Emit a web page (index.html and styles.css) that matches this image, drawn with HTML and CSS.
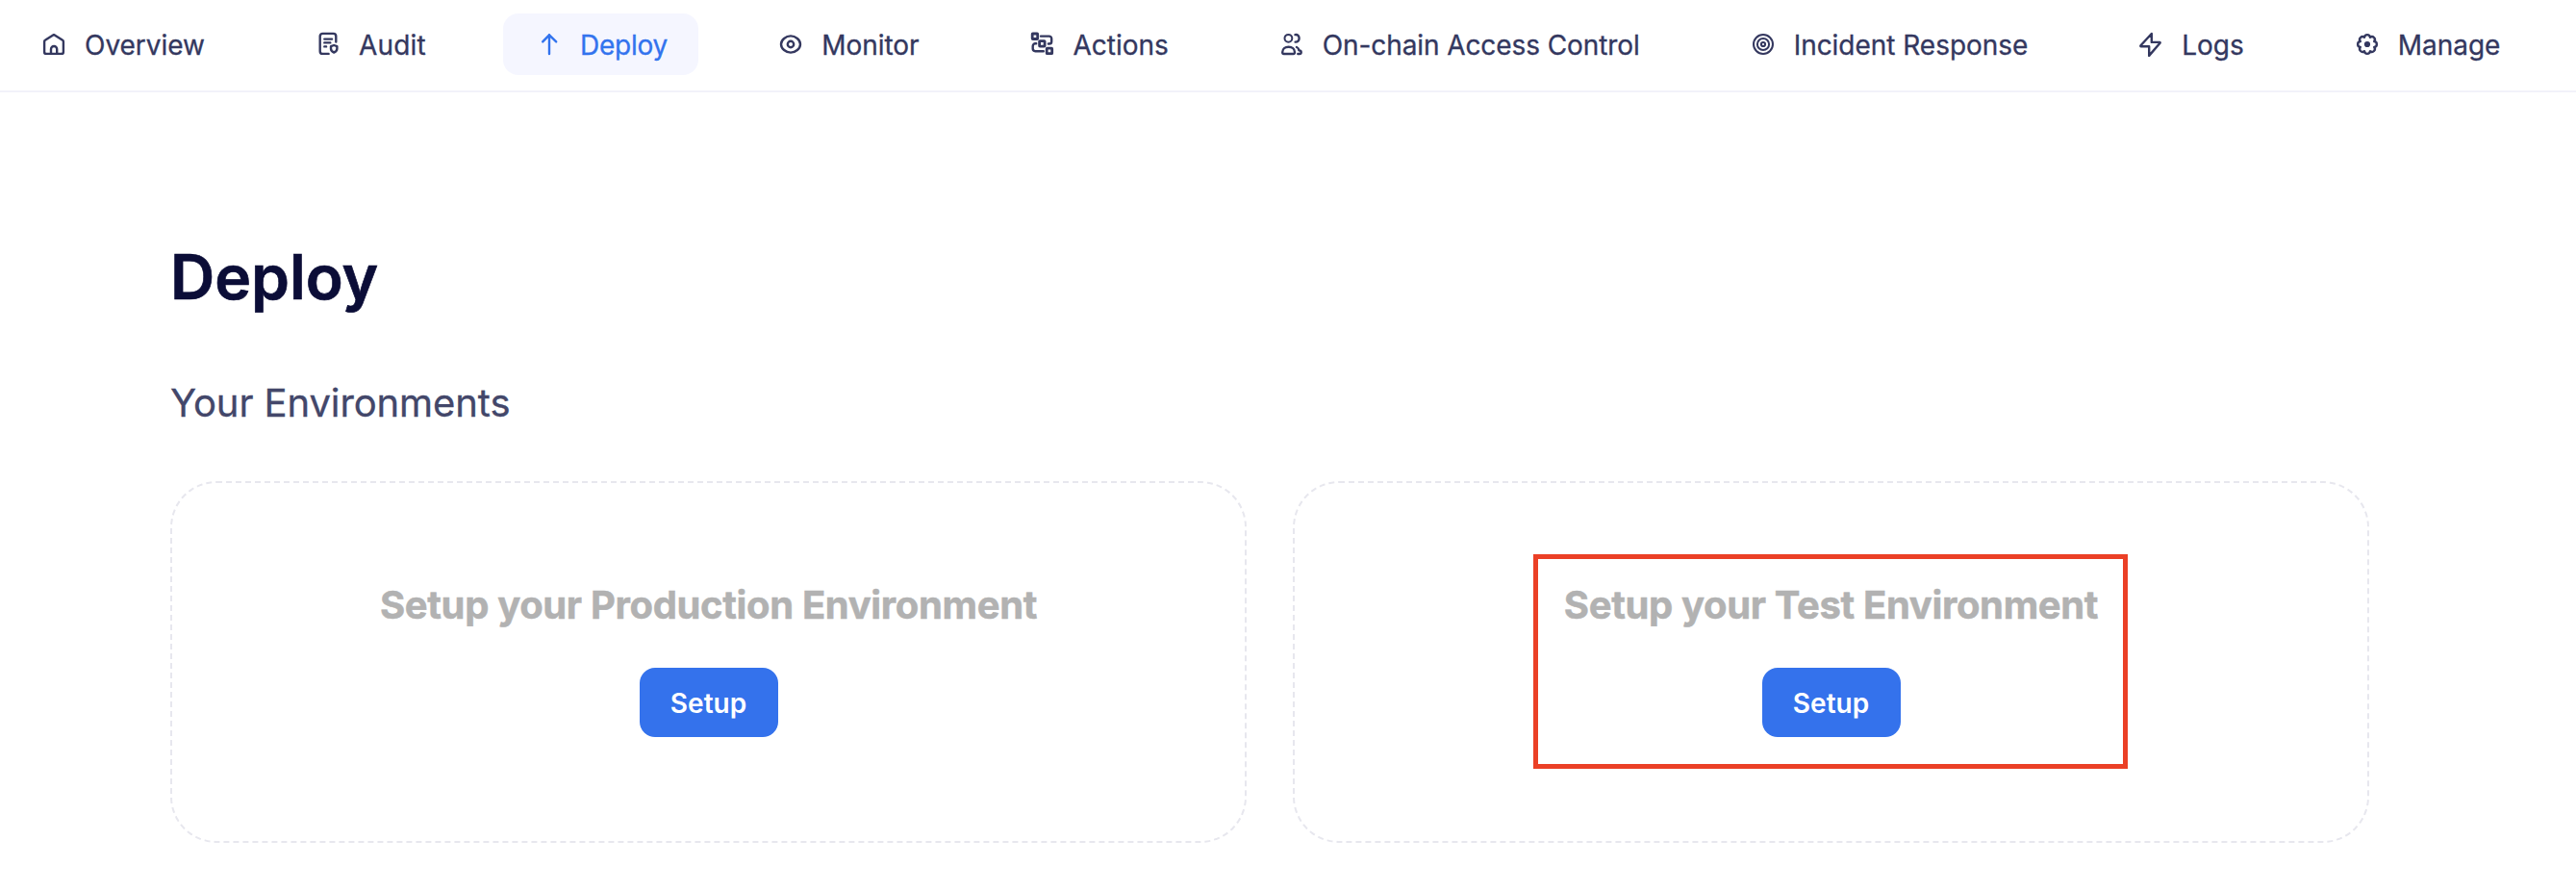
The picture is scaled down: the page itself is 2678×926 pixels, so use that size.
FILE: index.html
```html
<!DOCTYPE html>
<html lang="en">
<head>
<meta charset="utf-8">
<title>Deploy</title>
<link rel="stylesheet" href="styles.css">
</head>
<body>
<nav class="nav">
  <a class="nav-link">
    <svg class="icon" viewBox="0 0 32 32"><path d="M6.1 13.2a1.6 1.6 0 0 1 .8-1.4L16 6.1l9.1 5.7a1.6 1.6 0 0 1 .8 1.4v10.7a2 2 0 0 1-2 2H8.100a2 2 0 0 1-2-2z"/><path d="M13 25.500v-4.400a3.100 3.100 0 0 1 6.200 0v4.400"/></svg>
    <span class="nav-label">Overview</span>
  </a>
  <a class="nav-link nav-link--short">
    <svg class="icon" viewBox="0 0 32 32"><path d="M24.300 13.500V7.600a2.700 2.700 0 0 0-2.700-2.700H10.400a2.700 2.700 0 0 0-2.700 2.700v15.600a2.700 2.700 0 0 0 2.700 2.700h6.200M12.300 10.600h7.800M12.300 14.400h6M12.300 18.400h1.800M22.200 17l3.200 1.200v2.400c0 2-1.300 3.200-3.200 3.900-1.900-.7-3.200-1.900-3.200-3.900v-2.400z"/></svg>
    <span class="nav-label">Audit</span>
  </a>
  <a class="nav-link nav-link--active">
    <svg class="icon" viewBox="0 0 32 32"><path d="M16 26V6.300M9.200 13.400L16 6.300l7.200 7.100"/></svg>
    <span class="nav-label">Deploy</span>
  </a>
  <a class="nav-link">
    <svg class="icon" viewBox="0 0 32 32"><path d="M6 16c0-4.600 5-8.600 10-8.600s10 4 10 8.600-5 8.600-10 8.600S6 20.600 6 16z"/><circle cx="16" cy="16" r="3.200"/></svg>
    <span class="nav-label">Monitor</span>
  </a>
  <a class="nav-link">
    <svg class="icon" viewBox="0 0 32 32"><g class="icon-bold"><rect x="5.200" y="5" width="5.500" height="5.500" rx=".5"/><rect x="12.600" y="12.600" width="5.500" height="5.500" rx=".5"/><rect x="20.200" y="20.200" width="5.500" height="5.500" rx=".5"/></g><path d="M14 7.600h8.600a2.600 2.600 0 0 1 2.600 2.600v3a2.300 2.300 0 0 1-2.300 2.300h-1M9.200 15.300h-.9a2.600 2.600 0 0 0-2.600 2.600v2.700a2.600 2.600 0 0 0 2.600 2.600h8.500"/></svg>
    <span class="nav-label">Actions</span>
  </a>
  <a class="nav-link nav-link--long">
    <svg class="icon" viewBox="0 0 32 32"><circle class="icon-thin" cx="12.400" cy="9.800" r="3.900"/><path d="M19.400 6.100c2.700-.4 4.200 1.400 4.200 3.700s-1.500 4.100-4 3.800M6.200 24.300c0-3.300 2.900-5.600 6.400-5.600s6.400 2.300 6.400 5.600c0 1-.6 1.700-1.600 1.700H7.800c-1 0-1.600-.7-1.600-1.700zM21 19c1.500.6 2.200 1.700 2.300 3.200 1.300.2 2.400.9 2.400 2.100 0 1.100-.8 1.700-1.800 1.700h-1.600"/></svg>
    <span class="nav-label">On-chain Access Control</span>
  </a>
  <a class="nav-link">
    <svg class="icon" viewBox="0 0 32 32"><g class="icon-thin"><circle cx="16" cy="16" r="10"/><circle cx="16" cy="16" r="6.100"/><circle cx="16" cy="16" r="2.100"/></g></svg>
    <span class="nav-label">Incident Response</span>
  </a>
  <a class="nav-link">
    <svg class="icon" viewBox="0 0 32 32"><path d="M16.800 5L5.500 17.300c-.4.500-.2.900.4.900h8.300v9.700L25.500 14.800c.4-.5.200-.9-.4-.9h-8.300z"/></svg>
    <span class="nav-label">Logs</span>
  </a>
  <a class="nav-link">
    <svg class="icon" viewBox="0 0 32 32"><path d="M23.200 18.980A3 3 0 0 1 18.980 23.200 3 3 0 0 1 13.020 23.200 3 3 0 0 1 8.800 18.980 3 3 0 0 1 8.800 13.020 3 3 0 0 1 13.020 8.800 3 3 0 0 1 18.980 8.800 3 3 0 0 1 23.200 13.020 3 3 0 0 1 23.200 18.980z"/><circle class="icon-dot" cx="16" cy="16" r="3.100"/></svg>
    <span class="nav-label">Manage</span>
  </a>
</nav>
<main class="main">
  <h1 class="title">Deploy</h1>
  <h2 class="subtitle">Your Environments</h2>
  <div class="cards">
    <section class="card">
      <h3 class="card-title">Setup your Production Environment</h3>
      <button class="button">Setup</button>
    </section>
    <section class="card">
      <h3 class="card-title">Setup your Test Environment</h3>
      <button class="button">Setup</button>
      <div class="highlight"></div>
    </section>
  </div>
</main>
</body>
</html>
```

FILE: styles.css
```css
* {
  box-sizing: border-box;
}

body {
  margin: 0;
  background: #fff;
  font-family: Inter, "Liberation Sans", sans-serif;
}

.nav {
  display: flex;
  gap: 48px;
  height: 96px;
  padding: 14px 8px 16px;
  border-bottom: 2px solid #f2f2fa;
}

.nav-link {
  display: flex;
  flex: none;
  align-items: center;
  gap: 16px;
  height: 64px;
  padding: 0 32px;
  border-radius: 16px;
  color: #34385f;
  font-size: 28px;
  line-height: 34px;
  letter-spacing: -0.03px;
  white-space: nowrap;
  -webkit-text-stroke: 0.3px currentColor;
}

.nav-link--short {
  letter-spacing: 0.2px;
}

.nav-link--active {
  background: #f5f6ff;
  color: #3273ee;
  letter-spacing: -0.2px;
}

.nav-link--long {
  letter-spacing: -0.09px;
}

.nav-label {
  padding-top: 2px;
}

.icon {
  flex: none;
  width: 32px;
  height: 32px;
  fill: none;
  stroke: currentColor;
  stroke-width: 2.4;
  stroke-linecap: round;
  stroke-linejoin: round;
}

.icon-bold {
  stroke-width: 2.8;
}

.icon-thin {
  stroke-width: 2;
}

.icon-dot {
  fill: currentColor;
  stroke: none;
}

.main {
  padding: 153px 215px 0 177px;
}

.title {
  margin: 0;
  color: #0b0d37;
  font-size: 64px;
  font-weight: 600;
  line-height: 77px;
  -webkit-text-stroke: 0.7px currentColor;
}

.subtitle {
  margin: 68px 0 57px;
  color: #43476a;
  font-size: 40px;
  font-weight: 400;
  line-height: 49px;
  letter-spacing: -0.1px;
  -webkit-text-stroke: 0.3px currentColor;
}

.cards {
  display: grid;
  grid-template-columns: 1fr 1fr;
  gap: 48px;
}

.card {
  position: relative;
  display: flex;
  flex-direction: column;
  align-items: center;
  height: 376px;
  padding-top: 102px;
  border: 2px dashed #e7e7ee;
  border-radius: 48px;
}

.card-title {
  margin: 0 0 41px;
  color: #b2b2b2;
  font-size: 40px;
  font-weight: 700;
  line-height: 49px;
  letter-spacing: -0.35px;
  -webkit-text-stroke: 0.5px currentColor;
}

.button {
  width: 144px;
  height: 72px;
  padding: 2px 0 0;
  border: 0;
  border-radius: 16px;
  background: #3472ec;
  color: #fff;
  font-family: inherit;
  font-size: 28px;
  font-weight: 600;
  line-height: 34px;
}

/* Callout frame drawn over the test environment card */
.highlight {
  position: absolute;
  top: 74px;
  left: 248px;
  width: 618px;
  height: 223px;
  border: 5px solid #eb4026;
}
```
